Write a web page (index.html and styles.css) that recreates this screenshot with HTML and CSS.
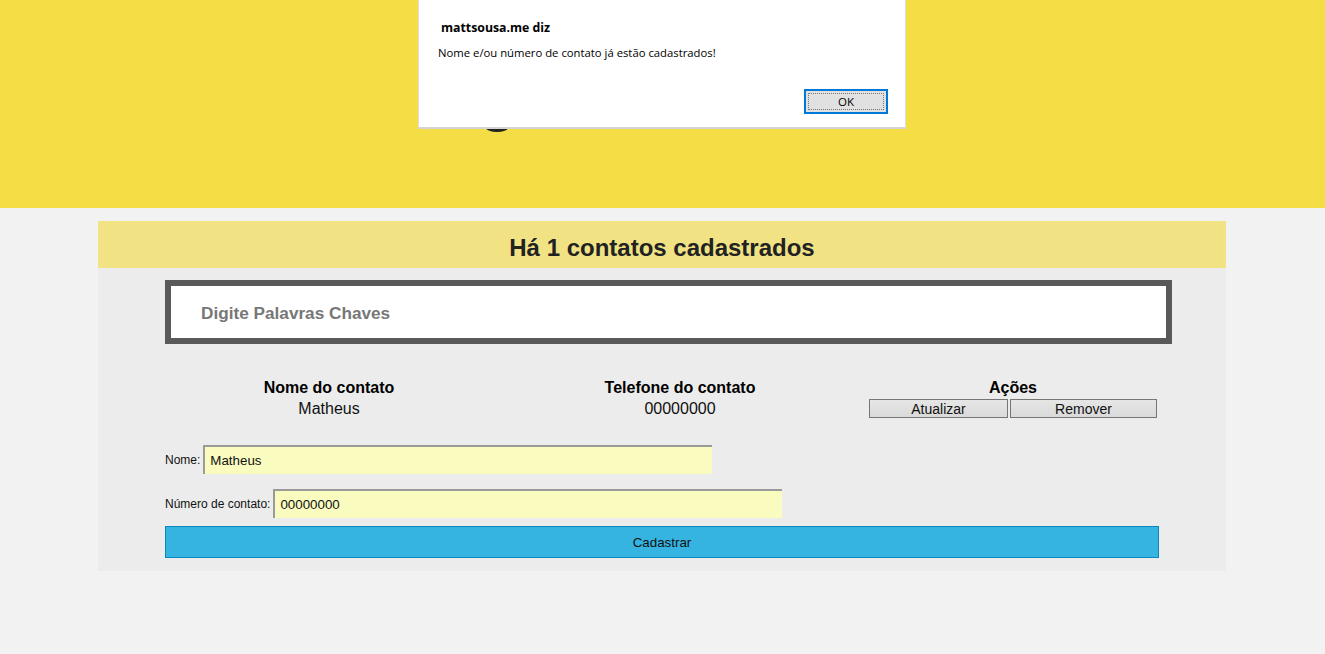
FILE: index.html
```html
<!DOCTYPE html>
<html lang="pt-BR">
<head>
<meta charset="utf-8">
<title>Contatos</title>
<link rel="stylesheet" href="styles.css">
</head>
<body>
<header class="top">
  <span class="logo-dot"></span>
</header>
<main class="box">
  <h2 class="title">Há 1 contatos cadastrados</h2>
  <div class="inner">
    <div class="search"><input class="search-input" type="text" placeholder="Digite Palavras Chaves"></div>
    <div class="table">
      <div class="cell head">Nome do contato</div>
      <div class="cell head">Telefone do contato</div>
      <div class="cell head">Ações</div>
      <div class="cell">Matheus</div>
      <div class="cell">00000000</div>
      <div class="cell actions"><button class="btn btn-upd">Atualizar</button><button class="btn btn-rem">Remover</button></div>
    </div>
    <form class="form">
      <div class="row"><label class="lbl">Nome:</label><input class="field" type="text" value="Matheus"></div>
      <div class="row"><label class="lbl">Número de contato:</label><input class="field" type="text" value="00000000"></div>
      <button class="submit" type="button">Cadastrar</button>
    </form>
  </div>
</main>
<div class="dialog">
  <div class="dlg-top">
    <div class="dlg-title">mattsousa.me diz</div>
    <div class="dlg-msg">Nome e/ou número de contato já estão cadastrados!</div>
  </div>
  <div class="dlg-bottom">
    <button class="ok" type="button"><span class="ok-inner">OK</span></button>
  </div>
</div>
</body>
</html>
```
FILE: styles.css
```css
* { box-sizing: border-box; }
html, body { margin: 0; padding: 0; }
body {
  background: #f2f2f2;
  font-family: "Liberation Sans", Arial, sans-serif;
  color: #111;
}
.top {
  height: 208px;
  background: #f4dd45;
  position: relative;
}
.logo-dot {
  position: absolute;
  left: 486px;
  top: 124px;
  width: 22px;
  height: 8px;
  border-radius: 50%;
  background: #222;
}
.box {
  width: 1128px;
  margin: 13px 0 0 98px;
  background: #ececec;
  padding-bottom: 13px;
}
.title {
  margin: 0;
  height: 47px;
  line-height: 53px;
  background: #f1e384;
  text-align: center;
  font-size: 24px;
  font-weight: bold;
  color: #222;
}
.inner {
  padding: 12px 54px 0 67px;
}
.search {
  height: 64px;
  border: 6px solid #595959;
  background: #fff;
}
.search-input {
  width: 100%;
  height: 100%;
  border: 0;
  outline: 0;
  background: transparent;
  padding: 2px 0 0 30px;
  font-family: "Liberation Sans", Arial, sans-serif;
  font-size: 17.2px;
  font-weight: bold;
  color: #777;
}
.search-input::placeholder { color: #777; }
.table {
  display: grid;
  grid-template-columns: 328px 374px 292px;
  margin-top: 33px;
  width: 994px;
}
.cell {
  text-align: center;
  font-size: 16px;
  line-height: 21px;
  color: #111;
}
.head { font-weight: bold; color: #000; }
.actions {
  display: flex;
  justify-content: center;
  gap: 2px;
  padding-top: 1px;
}
.btn {
  height: 19px;
  padding: 0;
  border: 1px solid #767676;
  background: linear-gradient(#e6e6e6, #dadada);
  font-family: "Liberation Sans", Arial, sans-serif;
  font-size: 14px;
  line-height: 16px;
  color: #111;
}
.btn-upd { width: 139px; }
.btn-rem { width: 147px; }
.form {
  width: 994px;
  margin-top: 26px;
}
.row {
  display: flex;
  align-items: center;
  margin-bottom: 15px;
}
.row + .row { margin-bottom: 8px; }
.lbl {
  font-size: 12px;
  color: #111;
  margin-right: 3px;
}
.field {
  width: 509px;
  height: 29px;
  background: #fafcbf;
  border: 0;
  border-top: 2px solid #9a9a9a;
  border-left: 2px solid #9a9a9a;
  padding: 0 0 0 5px;
  font-family: "Liberation Sans", Arial, sans-serif;
  font-size: 13.33px;
  color: #111;
  outline: 0;
}
.submit {
  display: block;
  width: 994px;
  height: 32px;
  background: #35b3e1;
  border: 1px solid #0a88bd;
  font-family: "Liberation Sans", Arial, sans-serif;
  font-size: 13.33px;
  color: #111;
  padding: 0;
}
.dialog {
  position: absolute;
  left: 418px;
  top: 0;
  width: 488px;
  height: 129px;
  background: #fff;
  border: 1px solid #dcdcdc;
  border-top: 0;
  border-bottom: 2px solid #d4d4d4;
  font-family: "Open Sans", "Noto Sans", sans-serif;
  color: #000;
}
.dlg-top {
  padding: 19px 0 0 19px;
  height: 78px;
}
.dlg-title {
  font-size: 12.3px;
  font-weight: bold;
  padding-left: 3px;
  line-height: 18px;
}
.dlg-msg {
  font-size: 11.3px;
  line-height: 16px;
  margin-top: 8px;
}
.dlg-bottom {
  display: flex;
  justify-content: flex-end;
  padding: 11px 17px 0 0;
}
.ok {
  width: 84px;
  height: 25px;
  padding: 2px;
  border: 2px solid #0078d7;
  background: #e1e1e1;
  font-family: "Open Sans", "Noto Sans", sans-serif;
  font-size: 11.5px;
  color: #000;
}
.ok-inner {
  display: flex;
  align-items: center;
  justify-content: center;
  width: 100%;
  height: 100%;
  border: 1px dotted #777;
}
```
